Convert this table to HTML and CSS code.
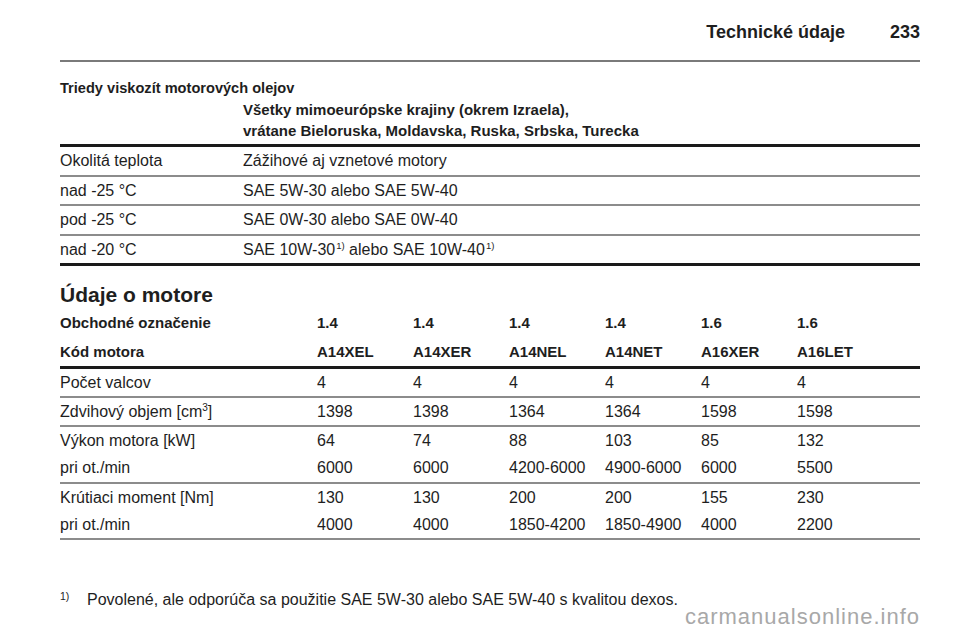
FILE: index.html
```html
<!DOCTYPE html>
<html lang="sk">
<head>
<meta charset="utf-8">
<title>Technické údaje 233</title>
<link rel="stylesheet" href="styles.css">
</head>
<body>
<div class="page">
  <header class="running-head">
    <span class="chapter">Technické údaje</span>
    <span class="folio">233</span>
  </header>

  <section class="oil">
    <h3 class="table-title">Triedy viskozít motorových olejov</h3>
    <table class="oil-table">
      <colgroup><col class="c-label"><col></colgroup>
      <thead>
        <tr><th></th><th>Všetky mimoeurópske krajiny (okrem Izraela),<br>vrátane Bieloruska, Moldavska, Ruska, Srbska, Turecka</th></tr>
      </thead>
      <tbody>
        <tr><td>Okolitá teplota</td><td>Zážihové aj vznetové motory</td></tr>
        <tr><td>nad -25 °C</td><td>SAE 5W-30 alebo SAE 5W-40</td></tr>
        <tr><td>pod -25 °C</td><td>SAE 0W-30 alebo SAE 0W-40</td></tr>
        <tr class="last"><td>nad -20 °C</td><td>SAE 10W-30<sup class="fn">1)</sup> alebo SAE 10W-40<sup class="fn">1)</sup></td></tr>
      </tbody>
    </table>
  </section>

  <section class="engine">
    <h2 class="section-title">Údaje o motore</h2>
    <table class="engine-table">
      <colgroup>
        <col class="e-label"><col class="e-col"><col class="e-col"><col class="e-col"><col class="e-col"><col class="e-col"><col>
      </colgroup>
      <thead>
        <tr><th>Obchodné označenie</th><th>1.4</th><th>1.4</th><th>1.4</th><th>1.4</th><th>1.6</th><th>1.6</th></tr>
        <tr class="code"><th>Kód motora</th><th>A14XEL</th><th>A14XER</th><th>A14NEL</th><th>A14NET</th><th>A16XER</th><th>A16LET</th></tr>
      </thead>
      <tbody>
        <tr class="ruled"><td>Počet valcov</td><td>4</td><td>4</td><td>4</td><td>4</td><td>4</td><td>4</td></tr>
        <tr class="ruled"><td>Zdvihový objem [cm<sup class="exp">3</sup>]</td><td>1398</td><td>1398</td><td>1364</td><td>1364</td><td>1598</td><td>1598</td></tr>
        <tr><td>Výkon motora [kW]</td><td>64</td><td>74</td><td>88</td><td>103</td><td>85</td><td>132</td></tr>
        <tr class="ruled"><td>pri ot./min</td><td>6000</td><td>6000</td><td>4200-6000</td><td>4900-6000</td><td>6000</td><td>5500</td></tr>
        <tr><td>Krútiaci moment [Nm]</td><td>130</td><td>130</td><td>200</td><td>200</td><td>155</td><td>230</td></tr>
        <tr class="ruled"><td>pri ot./min</td><td>4000</td><td>4000</td><td>1850-4200</td><td>1850-4900</td><td>4000</td><td>2200</td></tr>
      </tbody>
    </table>
  </section>

  <p class="footnote"><sup class="fn-mark">1)</sup><span>Povolené, ale odporúča sa použitie SAE 5W-30 alebo SAE 5W-40 s kvalitou dexos.</span></p>

  <div class="watermark">carmanualsonline.info</div>
</div>
</body>
</html>
```

FILE: styles.css
```css
html, body {
  margin: 0;
  padding: 0;
  background: #ffffff;
}

body {
  font-family: "Liberation Sans", Arial, Helvetica, sans-serif;
  color: #1e1e1e;
  font-size: 16px;
}

.page {
  position: relative;
  width: 860px;
  height: 642px;
  margin-left: 60px;
}

/* running head */
.running-head {
  display: flex;
  justify-content: flex-end;
  align-items: baseline;
  gap: 45px;
  height: 40px;
  padding-top: 20px;
  border-bottom: 2px solid #7a7a7a;
  font-size: 18px;
  font-weight: bold;
  line-height: 24px;
}

/* oil viscosity table */
.table-title {
  margin: 16px 0 0;
  font-size: 14.6px;
  line-height: 21px;
  font-weight: bold;
}

table {
  width: 100%;
  border-spacing: 0;
  border-collapse: separate;
  table-layout: fixed;
}

th, td {
  padding: 0;
  text-align: left;
  vertical-align: middle;
  white-space: nowrap;
}

.c-label { width: 183px; }

.oil-table th {
  font-size: 15px;
  line-height: 21px;
  font-weight: bold;
  padding-bottom: 3px;
  border-bottom: 3px solid #1a1a1a;
}

.oil-table td {
  font-size: 16px;
  line-height: 27.6px;
  border-bottom: 2px solid #8c8c8c;
}

.oil-table tr.last td {
  border-bottom: 3px solid #1a1a1a;
}

.fn {
  font-size: 9.5px;
  line-height: 0;
  vertical-align: 6px;
  margin-left: 1px;
}

/* engine data */
.section-title {
  margin: 15px 0 0;
  font-size: 21px;
  line-height: 28px;
  font-weight: bold;
}

.e-label { width: 257px; }
.e-col { width: 96px; }

.engine-table th {
  font-size: 15px;
  font-weight: bold;
  line-height: 28.4px;
}

.engine-table tr.code th {
  border-bottom: 3px solid #1a1a1a;
}

.engine-table td {
  font-size: 16px;
  line-height: 27.1px;
}

.engine-table tr.ruled td {
  border-bottom: 2px solid #8c8c8c;
}

.exp {
  font-size: 10px;
  line-height: 0;
  vertical-align: 6px;
}

/* footnote */
.footnote {
  display: flex;
  align-items: baseline;
  margin: 50px 0 0;
  font-size: 16px;
  line-height: 20px;
}

.fn-mark {
  width: 27px;
  flex: none;
  font-size: 10.5px;
  line-height: 0;
  position: relative;
  top: -5px;
}

/* watermark overlay */
.watermark {
  position: absolute;
  right: 0;
  top: 605px;
  font-size: 22px;
  letter-spacing: 1px;
  line-height: 24px;
  color: #a8a8a8;
}
```
